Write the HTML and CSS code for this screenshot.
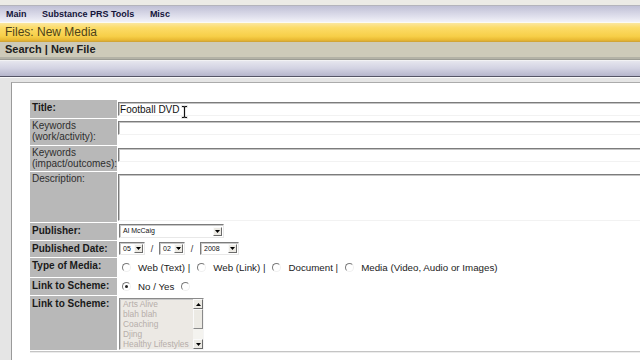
FILE: index.html
```html
<!DOCTYPE html>
<html lang="en">
<head>
  <meta charset="UTF-8" />
  <title>Files: New Media</title>
  <link rel="stylesheet" href="styles.css">
</head>
<body>
  <div class="topstrip"></div>

  <nav class="menubar">
    <a href="#">Main</a>
    <a href="#">Substance PRS Tools</a>
    <a href="#">Misc</a>
  </nav>

  <div class="titlebar">Files: New Media</div>

  <div class="subnav"><a href="#">Search</a> | <a href="#">New File</a></div>

  <div class="band"></div>

  <div class="page">
    <div class="panel">
      <table class="form">
        <tr class="row-title">
          <th>Title:</th>
          <td>
            <div class="field">
              <input type="text" class="text-input" value="Football DVD">
              <svg class="ibeam" width="7" height="14" viewBox="0 0 7 14">
                <path d="M0.5 0.5h2.5l0.5 0.7 0.5-0.7h2.5v2h-2v9h2v2h-2.5l-0.5-0.7-0.5 0.7h-2.5v-2h2v-9h-2z" fill="#111" stroke="#fff" stroke-width="0.8"/>
              </svg>
            </div>
          </td>
        </tr>
        <tr class="row-keywords">
          <th class="plain">Keywords<br>(work/activity):</th>
          <td><input type="text" class="text-input"></td>
        </tr>
        <tr class="row-keywords2">
          <th class="plain">Keywords<br>(impact/outcomes):</th>
          <td><input type="text" class="text-input"></td>
        </tr>
        <tr class="row-desc">
          <th class="plain">Description:</th>
          <td><textarea class="text-area"></textarea></td>
        </tr>
        <tr class="row-publisher">
          <th>Publisher:</th>
          <td>
            <span class="select select-publisher">
              <span class="select-value">Al McCaig</span>
              <span class="select-btn"><svg width="5" height="3" viewBox="0 0 5 3"><path d="M0 0h5l-2.5 3z" fill="#000"/></svg></span>
            </span>
          </td>
        </tr>
        <tr class="row-date">
          <th>Published Date:</th>
          <td>
            <div class="date-group">
              <span class="select select-day">
                <span class="select-value">05</span>
                <span class="select-btn"><svg width="5" height="3" viewBox="0 0 5 3"><path d="M0 0h5l-2.5 3z" fill="#000"/></svg></span>
              </span>
              <span class="slash">/</span>
              <span class="select select-day">
                <span class="select-value">02</span>
                <span class="select-btn"><svg width="5" height="3" viewBox="0 0 5 3"><path d="M0 0h5l-2.5 3z" fill="#000"/></svg></span>
              </span>
              <span class="slash">/</span>
              <span class="select select-year">
                <span class="select-value">2008</span>
                <span class="select-btn"><svg width="5" height="3" viewBox="0 0 5 3"><path d="M0 0h5l-2.5 3z" fill="#000"/></svg></span>
              </span>
            </div>
          </td>
        </tr>
        <tr class="row-type">
          <th>Type of Media:</th>
          <td>
            <div class="radio-group">
              <label class="radio-item"><span class="radio"></span>Web (Text) |</label>
              <label class="radio-item"><span class="radio"></span>Web (Link) |</label>
              <label class="radio-item"><span class="radio"></span>Document |</label>
              <label class="radio-item"><span class="radio"></span>Media (Video, Audio or Images)</label>
            </div>
          </td>
        </tr>
        <tr class="row-link">
          <th>Link to Scheme:</th>
          <td>
            <div class="radio-group">
              <label class="radio-item"><span class="radio checked"></span>No / Yes</label>
              <span class="radio"></span>
            </div>
          </td>
        </tr>
        <tr class="row-list">
          <th>Link to Scheme:</th>
          <td>
            <div class="listbox">
              <ul class="list-items">
                <li>Arts Alive</li>
                <li>blah blah</li>
                <li>Coaching</li>
                <li>Djing</li>
                <li>Healthy Lifestyles</li>
              </ul>
              <div class="scrollbar">
                <span class="scroll-btn"><svg width="5" height="3" viewBox="0 0 5 3"><path d="M0 3h5l-2.5-3z" fill="#000"/></svg></span>
                <span class="scroll-thumb"></span>
                <span class="scroll-track"></span>
                <span class="scroll-btn"><svg width="5" height="3" viewBox="0 0 5 3"><path d="M0 0h5l-2.5 3z" fill="#000"/></svg></span>
              </div>
            </div>
          </td>
        </tr>
      </table>
      <div class="footer"></div>
    </div>
  </div>
</body>
</html>
```

FILE: styles.css
```css
* {
  box-sizing: border-box;
}

body {
  margin: 0;
  width: 640px;
  height: 360px;
  overflow: hidden;
  font-family: 'Liberation Sans', Arial, sans-serif;
  background: #e5e5e5;
  color: #222;
}

a {
  color: inherit;
  text-decoration: none;
}

.topstrip {
  height: 6px;
  background: #ecebe6;
  border-bottom: 1px solid #b4b4bc;
}

.menubar {
  height: 17px;
  display: flex;
  align-items: center;
  gap: 15.5px;
  padding-left: 6px;
  background: linear-gradient(#c0c0d6, #e2e2ee 70%, #f2f2f8);
  border-bottom: 1px solid #fbfbf4;
  font-size: 9px;
  font-weight: 700;
  color: #14143a;
}

.titlebar {
  height: 19px;
  line-height: 18px;
  padding-left: 5px;
  background: linear-gradient(#fbe7a0, #fcdc68 25%, #f7cf48 70%, #e8b833 90%, #c99e38);
  font-size: 12px;
  color: #4d431a;
}

.subnav {
  height: 18px;
  line-height: 15px;
  padding-left: 5px;
  background: #cdcab9;
  border-bottom: 1px solid #9c9c94;
  box-shadow: inset 0 -2px 0 #b3b2a6;
  font-size: 11px;
  font-weight: 700;
  color: #202020;
}

.band {
  height: 17px;
  border-top: 1px solid #f2f2f4;
  background: linear-gradient(#e6e6ee, #d2d2e2 50%, #b6b6cc);
  border-bottom: 1px solid #555566;
}

.page {
  padding: 5px 0 0 11px;
  box-shadow: inset 0 1px 0 #fafafa;
}

.panel {
  background: #fff;
  border-top: 1px solid #ababab;
  border-left: 1px solid #9a9a9a;
  padding: 16px 0 0 17px;
  height: 278px;
  overflow: hidden;
}

.form {
  border-collapse: separate;
  border-spacing: 1px;
  width: 700px;
  font-size: 10px;
}

.form th {
  width: 87px;
  padding: 2px 0 0 2px;
  background: #b8b8b8;
  text-align: left;
  vertical-align: top;
  font-weight: 700;
  line-height: 11px;
  color: #1a1a1a;
  white-space: nowrap;
}

.form th.plain {
  font-weight: 400;
  padding-top: 1px;
  color: #2e2e2e;
}

.form td {
  padding: 0;
  vertical-align: top;
}

.row-title { height: 18px; }
.row-keywords { height: 26px; }
.row-keywords2 { height: 25px; }
.row-desc { height: 50px; }
.row-publisher { height: 17px; }
.row-date { height: 16px; }
.row-type { height: 19px; }
.row-link { height: 17px; }
.row-list { height: 54px; }

.field {
  position: relative;
}

.text-input,
.text-area {
  display: block;
  width: 560px;
  margin: 2px 0 0;
  padding: 0 1px;
  border: 1px solid;
  border-color: #7c7c7c #f2f2f2 #f2f2f2 #7c7c7c;
  box-shadow: inset 1px 1px 0 #c4c4c4;
  background: #fff;
  font-family: inherit;
  font-size: 10px;
  color: #111;
  outline: none;
}

.text-input {
  height: 14px;
}

.text-area {
  height: 47px;
  resize: none;
}

.ibeam {
  position: absolute;
  left: 63px;
  top: 3px;
}

.select {
  display: inline-flex;
  align-items: center;
  border: 1px solid;
  border-color: #7c7c7c #e8e8e8 #e8e8e8 #7c7c7c;
  box-shadow: inset 1px 1px 0 #c8c8c8;
  background: #fff;
  padding: 0 1px 0 3px;
  font-size: 7px;
  color: #111;
  vertical-align: top;
}

.select-value {
  flex: 1;
  line-height: 10px;
}

.select-btn {
  width: 9px;
  height: 9px;
  display: flex;
  align-items: center;
  justify-content: center;
  background: #eceae4;
  border: 1px solid;
  border-color: #fafafa #6c6c6c #6c6c6c #fafafa;
}

.select-publisher {
  width: 105px;
  height: 14px;
  margin-top: 1px;
  margin-left: 1px;
}

.date-group {
  display: flex;
  align-items: center;
  margin-top: 1px;
  margin-left: 1px;
}

.select-day,
.select-year {
  height: 13px;
}

.select-day {
  width: 26px;
}

.select-year {
  width: 39px;
}

.slash {
  font-size: 9px;
  width: 14px;
  text-align: center;
  color: #333;
}

.slash + .select-year {
  margin-left: 1px;
}

.radio-group {
  display: flex;
  align-items: center;
  height: 19px;
  padding-left: 4px;
  font-size: 9.75px;
  color: #222;
}

.row-link .radio-group {
  height: 17px;
}

.radio-item {
  display: flex;
  align-items: center;
  margin-right: 7px;
}

.radio {
  position: relative;
  width: 9px;
  height: 9px;
  margin-right: 7px;
  border-radius: 50%;
  border: 1px solid;
  border-color: #7a7a7a #f0f0f0 #f0f0f0 #7a7a7a;
  background: #fff;
}

.radio.checked::after {
  content: '';
  position: absolute;
  left: 2px;
  top: 2px;
  width: 3px;
  height: 3px;
  border-radius: 50%;
  background: #222;
}

.listbox {
  display: flex;
  width: 85px;
  height: 52px;
  margin: 2px 0 0 1px;
  border: 1px solid;
  border-color: #8a8a8a #f4f4f4 #f4f4f4 #8a8a8a;
  box-shadow: inset 1px 1px 0 #c8c8c8;
  background: #ece9e4;
}

.list-items {
  flex: 1;
  list-style: none;
  margin: 0;
  padding: 0 0 0 3px;
  font-size: 8.4px;
  line-height: 10px;
  color: #b6aeaa;
  overflow: hidden;
  white-space: nowrap;
}

.scrollbar {
  width: 10px;
  display: flex;
  flex-direction: column;
  background: #f4f3ef;
}

.scroll-btn {
  height: 10px;
  display: flex;
  align-items: center;
  justify-content: center;
  background: #eceae4;
  border: 1px solid;
  border-color: #fafafa #6c6c6c #6c6c6c #fafafa;
}

.scroll-thumb {
  height: 20px;
  background: #eceae4;
  border: 1px solid;
  border-color: #fafafa #8a8a8a #8a8a8a #fafafa;
}

.scroll-track {
  flex: 1;
}

.footer {
  margin-left: 1px;
  border-top: 1px solid #c4c4c4;
  box-shadow: 0 1px 0 #ececec;
}
```
